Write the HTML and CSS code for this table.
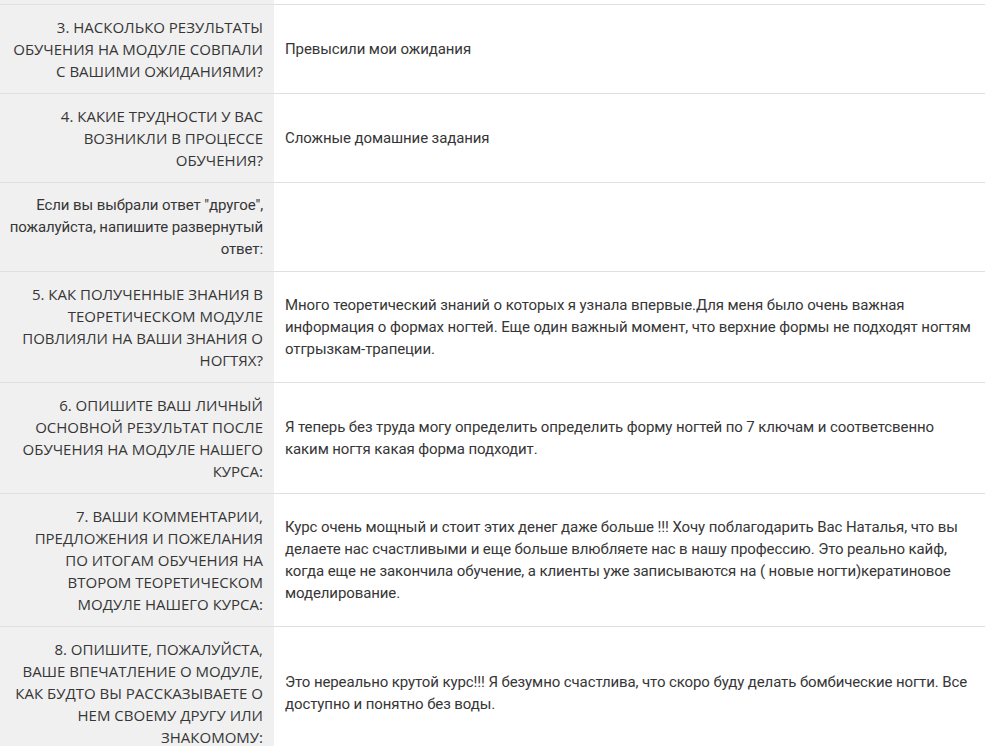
FILE: index.html
```html
<!DOCTYPE html>
<html lang="ru">
  <head>
    <meta charset="UTF-8" />
    <meta name="viewport" content="width=device-width, initial-scale=1.0" />
    <title>Анкета обратной связи</title>
    <link rel="stylesheet" href="styles.css">
  </head>
  <body>
    <table class="answers">
      <tr class="cut-row">
        <td class="question"></td>
        <td class="answer"></td>
      </tr>
      <tr>
        <td class="question caps">3. Насколько результаты обучения на модуле совпали с вашими ожиданиями?</td>
        <td class="answer">Превысили мои ожидания</td>
      </tr>
      <tr>
        <td class="question caps">4. Какие трудности у вас возникли в процессе обучения?</td>
        <td class="answer">Сложные домашние задания</td>
      </tr>
      <tr>
        <td class="question note">Если вы выбрали ответ "другое", пожалуйста, напишите развернутый ответ:</td>
        <td class="answer"></td>
      </tr>
      <tr>
        <td class="question caps">5. Как полученные знания в теоретическом модуле повлияли на ваши знания о ногтях?</td>
        <td class="answer">Много теоретический знаний о которых я узнала впервые.Для меня было очень важная информация о формах ногтей. Еще один важный момент, что верхние формы не подходят ногтям отгрызкам-трапеции.</td>
      </tr>
      <tr>
        <td class="question caps">6. Опишите ваш личный основной результат после обучения на модуле нашего курса:</td>
        <td class="answer">Я теперь без труда могу определить определить форму ногтей по 7 ключам и соответсвенно каким ногтя какая форма подходит.</td>
      </tr>
      <tr>
        <td class="question caps">7. Ваши комментарии, предложения и пожелания по итогам обучения на втором теоретическом модуле нашего курса:</td>
        <td class="answer">Курс очень мощный и стоит этих денег даже больше !!! Хочу поблагодарить Вас Наталья, что вы делаете нас счастливыми и еще больше влюбляете нас в нашу профессию. Это реально кайф, когда еще не закончила обучение, а клиенты уже записываются на ( новые ногти)кератиновое моделирование.</td>
      </tr>
      <tr>
        <td class="question caps">8. Опишите, пожалуйста, ваше впечатление о модуле, как будто вы рассказываете о нем своему другу или знакомому:</td>
        <td class="answer">Это нереально крутой курс!!! Я безумно счастлива, что скоро буду делать бомбические ногти. Все доступно и понятно без воды.</td>
      </tr>
    </table>
  </body>
</html>
```

FILE: styles.css
```css
* {
  margin: 0;
  padding: 0;
  box-sizing: border-box;
}

body {
  background-color: #fff;
  color: #363636;
  font-family: Roboto, Arial, sans-serif;
  font-size: 15px;
  line-height: 22px;
  letter-spacing: -0.1px;
}

/* Answers table */
.answers {
  width: 985px;
  border-collapse: collapse;
}

.answers td {
  padding: 11px;
  border-top: 1px solid #e0e0e0;
  vertical-align: middle;
}

.answers .cut-row td {
  height: 4px;
  padding: 0;
  border-top: none;
}

/* Question column */
.answers .question {
  width: 274px;
  background: #f0f0f0;
  text-align: right;
}

.answers .question.note {
  padding-left: 7px;
}

.question.caps {
  font-family: "Open Sans", Arial, sans-serif;
  text-transform: uppercase;
  letter-spacing: 0;
}

/* Answer column */
.answer {
  background: #fff;
}
```
